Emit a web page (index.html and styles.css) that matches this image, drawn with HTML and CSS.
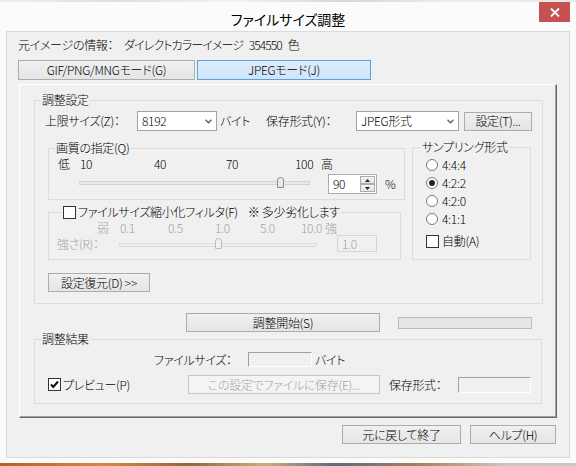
FILE: index.html
```html
<!DOCTYPE html>
<html lang="ja">
<head>
<meta charset="utf-8">
<title>ファイルサイズ調整</title>
<link rel="stylesheet" href="styles.css">
</head>
<body>
<div class="desk desk-top"></div>
<div class="window">
  <div class="titlebar">
    <div class="tb-spacer"></div>
    <div class="title">ファイルサイズ調整</div>
    <div class="close"><svg width="10" height="9" viewBox="0 0 10 9"><path d="M1 0.5 L9 8.5 M9 0.5 L1 8.5" stroke="#fff" stroke-width="1.8" fill="none"/></svg></div>
  </div>
  <div class="client">
    <div class="info"><span class="info-label">元イメージの情報：</span><span class="info-value">ダイレクトカラーイメージ 354550 色</span></div>
    <div class="modes">
      <div class="btn mode-gif">GIF/PNG/MNGモード(G)</div>
      <div class="btn mode-jpeg active">JPEGモード(J)</div>
    </div>
    <div class="panel">
      <fieldset class="grp settings">
        <legend>調整設定</legend>
        <div class="row1">
          <span class="lbl-limit">上限サイズ(Z)：</span>
          <div class="combo combo-size"><span>8192</span><svg class="chev" width="7" height="5" viewBox="0 0 7 5"><path d="M0.5 0.8 L3.5 3.8 L6.5 0.8" stroke="#666" stroke-width="1.5" fill="none"/></svg></div>
          <span class="lbl-byte">バイト</span>
          <span class="lbl-format">保存形式(Y)：</span>
          <div class="combo combo-format"><span>JPEG形式</span><svg class="chev" width="7" height="5" viewBox="0 0 7 5"><path d="M0.5 0.8 L3.5 3.8 L6.5 0.8" stroke="#666" stroke-width="1.5" fill="none"/></svg></div>
          <div class="btn btn-setting">設定(T)...</div>
        </div>
        <div class="mid">
          <div class="left-col">
            <fieldset class="grp quality">
              <legend>画質の指定(Q)</legend>
              <div class="ticks q-ticks">
                <span class="t qa">低</span><span class="t qb">10</span><span class="t qc">40</span><span class="t qd">70</span><span class="t qe">100</span><span class="t">高</span>
              </div>
              <div class="q-row">
                <div class="slider q-slider">
                  <div class="track"></div>
                  <svg class="thumb q-thumb" width="7" height="11" viewBox="0 0 7 11"><path d="M0.5 10.5 V3 Q0.5 0.5 3.5 0.5 Q6.5 0.5 6.5 3 V10.5 Z" fill="#e9e9e9" stroke="#8c8c8c"/></svg>
                </div>
                <div class="spin">
                  <span class="spin-val">90</span>
                  <div class="spin-btns">
                    <div class="sb"><svg width="5" height="3" viewBox="0 0 5 3"><path d="M0 3 L2.5 0 L5 3 Z" fill="#222"/></svg></div>
                    <div class="sb"><svg width="5" height="3" viewBox="0 0 5 3"><path d="M0 0 L2.5 3 L5 0 Z" fill="#222"/></svg></div>
                  </div>
                </div>
                <span class="pct">%</span>
              </div>
            </fieldset>
            <fieldset class="grp filter">
              <legend><span class="chk"></span><span class="f-title">ファイルサイズ縮小化フィルタ(F)</span><span class="note">※ 多少劣化します</span></legend>
              <div class="ticks f-ticks">
                <span class="t fa">弱</span><span class="t fb">0.1</span><span class="t fc">0.5</span><span class="t fd">1.0</span><span class="t fe">5.0</span><span class="t ff">10.0</span><span class="t">強</span>
              </div>
              <div class="f-row">
                <span class="lbl-strength">強さ(R)：</span>
                <div class="slider f-slider">
                  <div class="track track-dis"></div>
                  <svg class="thumb f-thumb" width="7" height="11" viewBox="0 0 7 11"><path d="M0.5 10.5 V3 Q0.5 0.5 3.5 0.5 Q6.5 0.5 6.5 3 V10.5 Z" fill="#f0f0f0" stroke="#bdbdbd"/></svg>
                </div>
                <div class="edit-dis">1.0</div>
              </div>
            </fieldset>
          </div>
          <fieldset class="grp sampling">
            <legend>サンプリング形式</legend>
            <div class="s-body">
              <div class="s-row"><span class="radio"></span><span>4:4:4</span></div>
              <div class="s-row"><span class="radio on"></span><span>4:2:2</span></div>
              <div class="s-row"><span class="radio"></span><span>4:2:0</span></div>
              <div class="s-row"><span class="radio"></span><span>4:1:1</span></div>
              <div class="s-row s-auto"><span class="chk"></span><span>自動(A)</span></div>
            </div>
          </fieldset>
        </div>
        <div class="btn btn-restore">設定復元(D) &gt;&gt;</div>
      </fieldset>
      <div class="run-row">
        <div class="btn btn-run">調整開始(S)</div>
        <div class="progress"></div>
      </div>
      <fieldset class="grp result">
        <legend>調整結果</legend>
        <div class="r-rowA">
          <span class="lbl-fsize">ファイルサイズ：</span>
          <div class="ro-box fsize-box"></div>
          <span class="lbl-byte2">バイト</span>
        </div>
        <div class="r-rowB">
          <span class="chk checked"><svg width="11" height="11" viewBox="0 0 11 11"><path d="M2 5.5 L4.3 8 L9 2.5" stroke="#111" stroke-width="2" fill="none"/></svg></span>
          <span class="lbl-preview">プレビュー(P)</span>
          <div class="btn btn-save disabled">この設定でファイルに保存(E)...</div>
          <span class="lbl-format2">保存形式：</span>
          <div class="ro-box format-box"></div>
        </div>
      </fieldset>
    </div>
    <div class="footer">
      <div class="btn btn-restore-exit">元に戻して終了</div>
      <div class="btn btn-help">ヘルプ(H)</div>
    </div>
  </div>
</div>
<div class="desk desk-bottom"></div>
</body>
</html>
```

FILE: styles.css
```css
* { box-sizing: border-box; }
html, body { margin: 0; padding: 0; }
body {
  width: 576px; height: 466px; overflow: hidden;
  background: #fbfbfb;
  font-family: "Noto Sans CJK JP", "Noto Sans", sans-serif;
  font-size: 12px; line-height: 14px; color: #000;
  font-weight: 300;
  letter-spacing: -0.3px;
  font-feature-settings: "palt";
}
.desk { width: 576px; }
.desk-top { height: 2px; background: linear-gradient(90deg, #efefef 0, #e2ded6 20%, #f3f3f3 40%, #dad6ce 60%, #efefef 80%, #e6e6e6 100%); }
.desk-bottom { height: 3px; background: linear-gradient(90deg, #b8621e 0, #d98a3a 18%, #8a6a40 33%, #c9b080 46%, #5a6c7c 58%, #a08060 72%, #d0c8b8 88%, #c8c8c8 100%); }

.window { height: 461px; padding: 0 6px 5px; background: #fbfbfb; }
.titlebar { height: 29px; display: flex; align-items: flex-start; }
.tb-spacer { width: 31px; }
.title { flex: 1; text-align: center; font-size: 14px; line-height: 20px; padding-top: 7px; color: #000; letter-spacing: 0; font-weight: 400; }
.close { width: 31px; height: 20px; background: #c75050; display: flex; align-items: center; justify-content: center; }

.client { height: 427px; border: 1px solid #dadada; background: #f0f0f0; }
.info { margin: 6px 0 0 11px; height: 14px; display: flex; white-space: nowrap; }
.info-label { width: 106px; }
.info-value { letter-spacing: -0.9px; word-spacing: 4px; }
.modes { display: flex; margin: 8px 0 0 11px; gap: 2px; height: 20px; }

.btn {
  display: flex; align-items: center; justify-content: center;
  border: 1px solid #acacac; background: linear-gradient(#f0f0f0, #e5e5e5);
  white-space: nowrap;
}
.mode-gif { width: 177px; }
.mode-jpeg { width: 174px; }
.btn.active { background: linear-gradient(#dcecfc, #cfe5fa); border-color: #5c9fe2; }
.btn.disabled { color: #a0a0a0; border-color: #c6c6c6; background: #f4f4f4; }

.panel {
  margin: 4px 0 0 12px; width: 538px; height: 334px;
  border: 1px solid; border-color: #fff #696969 #696969 #fff;
  box-shadow: inset -1px -1px 0 #a0a0a0;
}

.grp { margin: 0; padding: 0; border: 1px solid #dcdcdc; min-width: 0; }
.grp > legend { padding: 0 1px; margin-left: 6px; line-height: 14px; height: 14px; white-space: nowrap; }

.settings { margin: 8px 0 0 14px; width: 509px; height: 211px; }
.row1 { display: flex; align-items: center; margin-top: 4px; height: 20px; white-space: nowrap; }
.lbl-limit { margin-left: 10px; width: 92px; }
.combo {
  height: 20px; background: #fff; border: 1px solid #a3a3a3;
  display: flex; align-items: center; justify-content: space-between; padding: 0 4px 0 4px;
}
.combo-size { width: 80px; }
.combo-format { width: 103px; }
.lbl-byte { margin-left: 3px; width: 46px; }
.lbl-format { width: 90px; }
.btn-setting { margin-left: 5px; width: 68px; height: 19px; }

.mid { display: flex; margin-top: 9px; height: 120px; }
.left-col { margin-left: 13px; width: 357px; }
.quality { margin-top: 1px; width: 357px; height: 59px; }
.filter { margin-top: 5px; width: 353px; height: 55px; }
.filter > legend { margin-left: 13px; display: flex; align-items: center; }
.sampling { margin-left: 7px; width: 119px; height: 120px; }
.sampling > legend { margin-left: 8px; }

.ticks { display: flex; height: 14px; white-space: nowrap; }
.t { display: block; }
.q-ticks { margin: 2px 0 0 9px; }
.qa { width: 22px; } .qb { width: 74px; } .qc { width: 72px; } .qd { width: 69px; } .qe { width: 26px; }

.q-row { display: flex; align-items: center; margin-top: 3px; height: 20px; }
.slider { position: relative; }
.track { height: 4px; background: #e7eaea; border: 1px solid #d3d3d3; }
.track-dis { background: #eeeeee; border-color: #dcdcdc; }
.thumb { position: absolute; display: block; }
.q-slider { margin-left: 30px; width: 231px; height: 20px; padding-top: 7px; }
.q-thumb { left: 198px; top: 3px; }

.spin { margin-left: 18px; width: 49px; height: 20px; border: 1px solid #abadb3; background: #fff; display: flex; justify-content: space-between; }
.spin-val { padding: 2px 0 0 4px; }
.spin-btns { width: 16px; display: flex; flex-direction: column; padding: 1px 1px 1px 0; gap: 0; }
.sb { flex: 1; border: 1px solid #acacac; background: linear-gradient(#f2f2f2, #e4e4e4); display: flex; align-items: center; justify-content: center; }
.sb svg { display: block; }
.pct { margin-left: 8px; }

.chk { width: 13px; height: 13px; border: 1px solid #333; background: #fff; display: inline-flex; align-items: center; justify-content: center; flex: none; }
.chk svg { display: block; }
.f-title { margin-left: 2px; }
.note { margin-left: 10px; }

.f-ticks { margin: 2px 0 0 48px; color: #a0a0a0; }
.fa { width: 23px; } .fb { width: 48px; } .fc { width: 47px; } .fd { width: 45px; } .fe { width: 41px; } .ff { width: 24px; }
.f-row { display: flex; align-items: center; margin-top: 0; height: 17px; color: #a0a0a0; white-space: nowrap; }
.lbl-strength { margin-left: 8px; width: 62px; }
.f-slider { width: 198px; height: 17px; padding-top: 8px; }
.f-thumb { left: 96px; top: 3px; }
.edit-dis { margin-left: 20px; width: 40px; height: 17px; border: 1px solid #d4d4d4; background: #f0f0f0; padding: 1px 0 0 4px; }

.s-body { padding: 2px 0 0 13px; }
.s-row { height: 18px; display: flex; align-items: center; gap: 4px; white-space: nowrap; }
.s-auto { margin-top: 4px; gap: 3px; }
.radio { width: 12px; height: 12px; border: 1px solid #7a7a7a; border-radius: 50%; background: #fff; display: flex; align-items: center; justify-content: center; flex: none; }
.radio.on::after { content: ""; width: 6px; height: 6px; border-radius: 50%; background: #222; }

.btn-restore { margin: 13px 0 0 13px; width: 102px; height: 19px; }

.run-row { display: flex; align-items: center; margin-top: 9px; height: 19px; }
.btn-run { margin-left: 166px; width: 194px; height: 19px; }
.progress { margin-left: 18px; width: 134px; height: 12px; border: 1px solid #bcbcbc; background: #e6e6e6; }

.result { margin: 0 0 0 14px; width: 508px; height: 72px; }
.r-rowA { display: flex; align-items: center; margin-top: 6px; height: 15px; white-space: nowrap; }
.lbl-fsize { margin-left: 119px; width: 94px; }
.ro-box { border: 1px solid; border-color: #a0a0a0 #fff #fff #a0a0a0; background: #f0f0f0; }
.fsize-box { width: 64px; height: 15px; }
.lbl-byte2 { margin-left: 3px; }
.r-rowB { display: flex; align-items: center; margin-top: 8px; height: 19px; white-space: nowrap; }
.r-rowB .chk { margin-left: 13px; }
.lbl-preview { margin-left: 2px; width: 125px; }
.btn-save { width: 192px; height: 19px; }
.lbl-format2 { margin-left: 9px; width: 69px; }
.format-box { width: 73px; height: 16px; }

.footer { display: flex; justify-content: flex-end; gap: 9px; margin: 7px 13px 0 0; }
.btn-restore-exit { width: 119px; height: 19px; }
.btn-help { width: 86px; height: 19px; }
```
